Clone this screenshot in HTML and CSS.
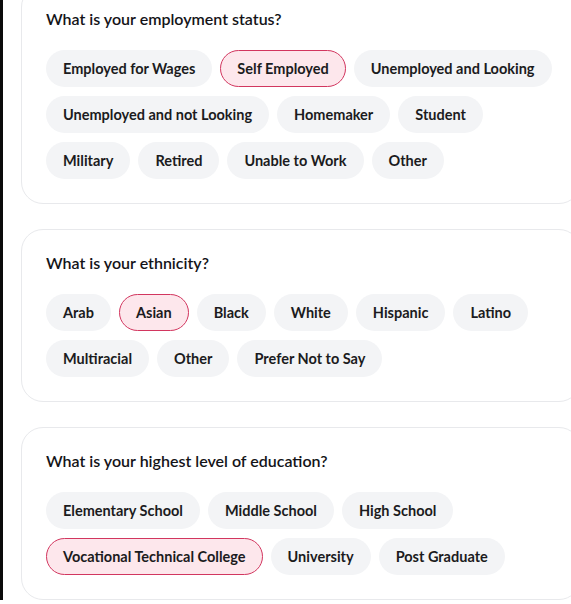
FILE: index.html
```html
<!DOCTYPE html>
<html lang="en">
<head>
<meta charset="utf-8">
<title>Profile questions</title>
<link rel="stylesheet" href="styles.css">
</head>
<body>
<div class="page">
  <main class="list">
    <section class="card">
      <h2 class="question">What is your employment status?</h2>
      <div class="chips">
        <span class="chip">Employed for Wages</span>
        <span class="chip selected">Self Employed</span>
        <span class="chip">Unemployed and Looking</span>
        <span class="chip">Unemployed and not Looking</span>
        <span class="chip">Homemaker</span>
        <span class="chip">Student</span>
        <span class="chip">Military</span>
        <span class="chip">Retired</span>
        <span class="chip">Unable to Work</span>
        <span class="chip">Other</span>
      </div>
    </section>
    <section class="card">
      <h2 class="question">What is your ethnicity?</h2>
      <div class="chips">
        <span class="chip">Arab</span>
        <span class="chip selected">Asian</span>
        <span class="chip">Black</span>
        <span class="chip">White</span>
        <span class="chip">Hispanic</span>
        <span class="chip">Latino</span>
        <span class="chip">Multiracial</span>
        <span class="chip">Other</span>
        <span class="chip">Prefer Not to Say</span>
      </div>
    </section>
    <section class="card">
      <h2 class="question">What is your highest level of education?</h2>
      <div class="chips">
        <span class="chip">Elementary School</span>
        <span class="chip">Middle School</span>
        <span class="chip">High School</span>
        <span class="chip selected">Vocational Technical College</span>
        <span class="chip">University</span>
        <span class="chip">Post Graduate</span>
      </div>
    </section>
  </main>
</div>
</body>
</html>
```
FILE: styles.css
```css
html, body {
  margin: 0;
  padding: 0;
  background: #ffffff;
  overflow: hidden;
}
body {
  font-family: Lato, "Noto Sans", sans-serif;
  color: #17171c;
}
.page {
  border-left: 3px solid #0b0b0b;
  min-height: 604px;
  box-sizing: border-box;
}
.list {
  display: flex;
  flex-direction: column;
  gap: 25px;
  margin-top: -15px;
  padding-left: 18px;
  width: 560px;
}
.card {
  border: 1px solid #e8e9ec;
  border-radius: 22px;
  padding: 21px 24px 24px;
  background: #ffffff;
}
.question {
  margin: 0 0 19px;
  font-size: 16px;
  line-height: 24px;
  font-weight: 600;
  color: #141418;
}
.chips {
  display: flex;
  flex-wrap: wrap;
  gap: 9px 8px;
}
.chip {
  display: inline-block;
  box-sizing: border-box;
  height: 37px;
  padding: 7px 16px;
  border: 1px solid transparent;
  border-radius: 19px;
  background: #f3f4f6;
  font-size: 14.5px;
  line-height: 21px;
  font-weight: 700;
  color: #1b1b20;
  white-space: nowrap;
}
.chip.selected {
  background: #fde7ec;
  border-color: #d2365f;
}
```
